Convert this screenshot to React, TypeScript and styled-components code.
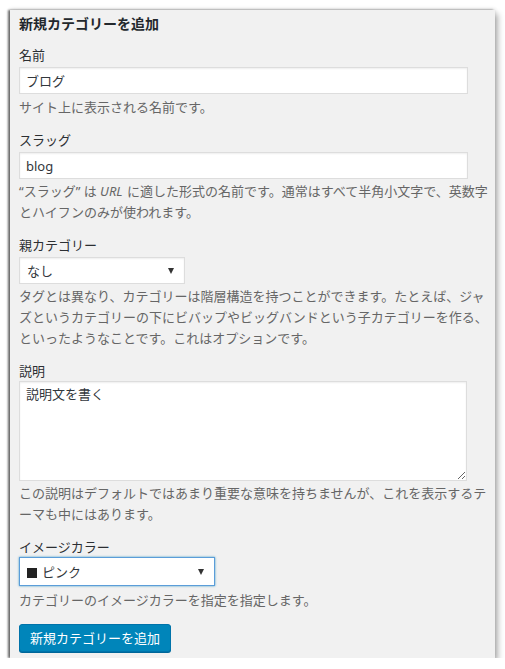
import React from 'react'
import styled, { createGlobalStyle } from 'styled-components'

const GlobalStyle = createGlobalStyle`
  html, body {
    margin: 0;
    padding: 0;
    background: #ffffff;
  }
  body {
    font-family: "Noto Sans", "Noto Sans CJK JP", sans-serif;
    font-size: 13px;
    color: #444444;
  }
`

const Panel = styled.div`
  width: 485px;
  height: 648px;
  box-sizing: border-box;
  margin: 10px 0 0 10px;
  padding: 0 0 7px 9px;
  background: #f1f1f1;
  box-shadow:
    -2px 0 2px rgba(0, 0, 0, 0.55),
    3px 4px 6px rgba(0, 0, 0, 0.3),
    0 -1px 4px rgba(0, 0, 0, 0.12);
  display: flex;
  flex-direction: column;
`

const Title = styled.h2`
  margin: 0 0 11px;
  padding-top: 3px;
  font-size: 14px;
  line-height: 21px;
  font-weight: 700;
  color: #23282d;
`

const Field = styled.div`
  display: flex;
  flex-direction: column;
  align-items: flex-start;
  margin-bottom: 12px;
`

const Label = styled.label<{ $tight?: boolean }>`
  display: block;
  line-height: 20px;
  margin-bottom: ${p => (p.$tight ? '0' : '2px')};
  color: #2c2f33;
`

const TextInput = styled.input`
  box-sizing: border-box;
  width: 449px;
  height: 27px;
  margin: 0;
  padding: 0 6px;
  border: 1px solid #dddddd;
  background: #ffffff;
  box-shadow: inset 0 1px 2px rgba(0, 0, 0, 0.07);
  font: inherit;
  color: #32373c;
  outline: none;
`

const TextArea = styled.textarea`
  box-sizing: border-box;
  width: 448px;
  height: 100px;
  margin: 0;
  padding: 2px 6px;
  border: 1px solid #dddddd;
  background: #ffffff;
  box-shadow: inset 0 1px 2px rgba(0, 0, 0, 0.07);
  font: inherit;
  line-height: 20px;
  color: #32373c;
  outline: none;
`

const SelectBox = styled.div<{ $width: number; $focused?: boolean }>`
  box-sizing: border-box;
  width: ${p => p.$width}px;
  height: ${p => (p.$focused ? 29 : 27)}px;
  padding: 0 10px 0 7px;
  display: flex;
  align-items: center;
  justify-content: space-between;
  background: #ffffff;
  border: 1px solid ${p => (p.$focused ? '#5b9dd9' : '#dddddd')};
  box-shadow: ${p =>
    p.$focused ? '0 0 2px rgba(30, 140, 190, 0.8)' : 'inset 0 1px 2px rgba(0, 0, 0, 0.07)'};
  color: #32373c;
`

const Arrow = styled.span`
  width: 0;
  height: 0;
  border-left: 3.5px solid transparent;
  border-right: 3.5px solid transparent;
  border-top: 6px solid #333333;
`

const Swatch = styled.span`
  display: inline-block;
  width: 10px;
  height: 10px;
  margin-right: 5px;
  background: #222222;
  vertical-align: -1px;
`

const Description = styled.p<{ $gap?: number }>`
  margin: ${p => p.$gap ?? 2}px 0 0;
  line-height: 21px;
  color: #666666;
  width: 470px;
`

const Em = styled.i`
  padding-right: 1px;
`

const PrimaryButton = styled.button`
  align-self: flex-start;
  box-sizing: border-box;
  height: 28px;
  margin-top: 1px;
  padding: 0 10px;
  border: 1px solid #0073aa;
  border-radius: 3px;
  background: #0085ba;
  box-shadow: 0 1px 0 #006799;
  color: #ffffff;
  font: inherit;
  line-height: 26px;
  cursor: pointer;
`

export default function App (): React.ReactElement {
  return (
    <>
      <GlobalStyle />
      <Panel>
        <Title>新規カテゴリーを追加</Title>
        <Field>
          <Label>名前</Label>
          <TextInput defaultValue="ブログ" />
          <Description $gap={3}>サイト上に表示される名前です。</Description>
        </Field>
        <Field>
          <Label>スラッグ</Label>
          <TextInput defaultValue="blog" />
          <Description>
            “スラッグ” は <Em>URL</Em> に適した形式の名前です。通常はすべて半角小文字で、英数字とハイフンのみが使われます。
          </Description>
        </Field>
        <Field>
          <Label>親カテゴリー</Label>
          <SelectBox $width={166}>
            <span>なし</span>
            <Arrow />
          </SelectBox>
          <Description>
            タグとは異なり、カテゴリーは階層構造を持つことができます。たとえば、ジャズというカテゴリーの下にビバップやビッグバンドという子カテゴリーを作る、といったようなことです。これはオプションです。
          </Description>
        </Field>
        <Field>
          <Label $tight>説明</Label>
          <TextArea defaultValue="説明文を書く" />
          <Description>
            この説明はデフォルトではあまり重要な意味を持ちませんが、これを表示するテーマも中にはあります。
          </Description>
        </Field>
        <Field>
          <Label $tight>イメージカラー</Label>
          <SelectBox $width={196} $focused>
            <span><Swatch />ピンク</span>
            <Arrow />
          </SelectBox>
          <Description $gap={4}>カテゴリーのイメージカラーを指定を指定します。</Description>
        </Field>
        <PrimaryButton>新規カテゴリーを追加</PrimaryButton>
      </Panel>
    </>
  )
}
